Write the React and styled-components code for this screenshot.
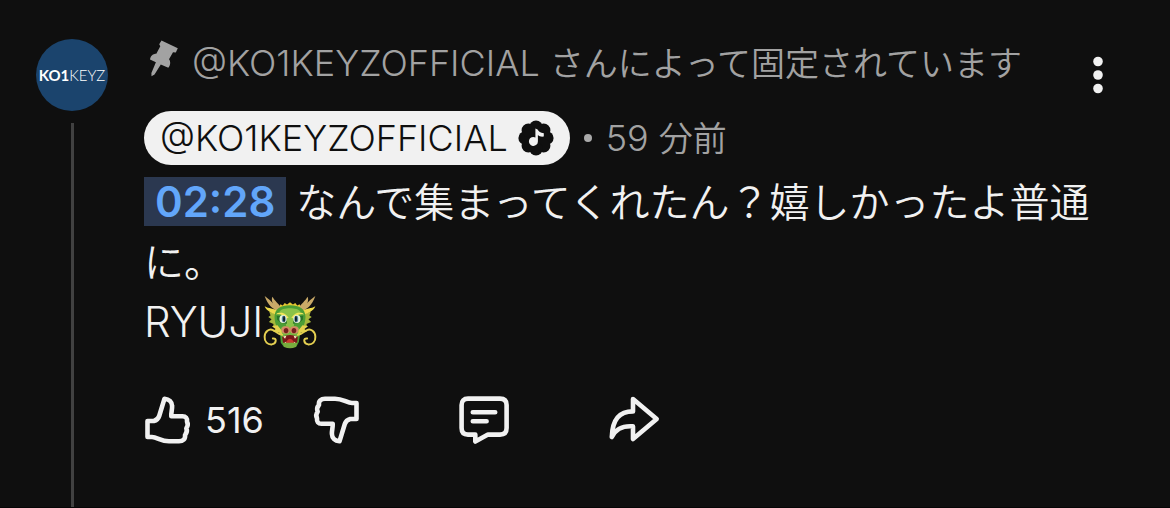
import React from "react";
import styled, { createGlobalStyle } from "styled-components";

const latin = `Inter, "Noto Sans CJK JP", sans-serif`;

const GlobalStyle = createGlobalStyle`
  *, *::before, *::after { box-sizing: border-box; }
  body {
    margin: 0;
    background: #0f0f0f;
    color: #f1f1f1;
    font-family: ${latin};
    font-weight: 350;
  }
`;

const Comment = styled.article`
  display: grid;
  grid-template-columns: 72px minmax(0, 1fr);
  column-gap: 36px;
  min-height: 100vh;
  padding: 39px 56px 0 36px;
  border-bottom: 1px solid #060606;
`;

const Rail = styled.div`
  display: flex;
  flex-direction: column;
  align-items: center;
  gap: 12px;
`;

const Avatar = styled.a`
  display: flex;
  flex: none;
  align-items: center;
  justify-content: center;
  width: 72px;
  height: 72px;
  border-radius: 50%;
  background: #1b446d;
  color: #fff;
  font: 300 15px/20px Lato, sans-serif;
  text-decoration: none;
`;

const AvatarStrong = styled.span`
  font-weight: 700;
`;

const ThreadLine = styled.div`
  flex: 1;
  width: 3px;
  background: #414141;
`;

const Content = styled.div`
  min-width: 0;
  padding-bottom: 60px;
`;

const Header = styled.header`
  display: flex;
  align-items: flex-start;
  justify-content: space-between;
  height: 72px;
`;

const Pinned = styled.div`
  display: flex;
  align-items: flex-start;
  gap: 13px;
  padding-left: 3px;
  color: #a2a2a2;
  font-size: 36px;
  line-height: 48px;
`;

const Japanese = styled.span`
  font-family: "Noto Sans CJK JP", sans-serif;
  font-weight: 350;
  font-size: ${(p) => p.$size}px;
  line-height: ${(p) => p.$size}px;
`;

const MenuButton = styled.button`
  display: flex;
  padding: 0;
  border: 0;
  background: none;
  color: inherit;
  cursor: pointer;
`;

const Byline = styled.div`
  display: flex;
  align-items: center;
  gap: 14px;
  color: #a2a2a2;
  font-size: 36px;
  line-height: 54px;
`;

const AuthorChip = styled.a`
  display: flex;
  align-items: center;
  gap: 10px;
  height: 54px;
  padding: 0 16px;
  border-radius: 27px;
  background: #f1f1f1;
  color: #0f0f0f;
  text-decoration: none;
`;

const Dot = styled.span`
  width: 8px;
  height: 8px;
  border-radius: 50%;
  background: #aaa;
`;

const Body = styled.p`
  margin: 7px 0 0;
  font-size: 42px;
  line-height: 60px;
`;

const Timestamp = styled.a`
  display: inline-block;
  margin-right: 10px;
  padding: 0 11px;
  background: #2b3850;
  color: #62a6fa;
  font-weight: 600;
  line-height: 49px;
  text-decoration: none;
`;

const Emoji = styled.svg`
  width: 54px;
  height: 54px;
  vertical-align: -12px;
`;

const Actions = styled.div`
  display: flex;
  align-items: center;
  gap: 98px;
  margin-top: 42px;
`;

const Votes = styled.div`
  display: flex;
  gap: 48px;
`;

const Action = styled.button`
  display: flex;
  align-items: center;
  gap: 13px;
  padding: 0;
  border: 0;
  background: none;
  color: inherit;
  font: 400 36px/52px ${latin};
  cursor: pointer;
`;

const LineIcon = styled.svg`
  width: ${(p) => p.$size || 52}px;
  height: ${(p) => p.$size || 52}px;
  fill: none;
  stroke: currentColor;
  stroke-width: 4.6;
  stroke-linecap: round;
  stroke-linejoin: round;
`;

const thumb =
  "M3.5 25V41H8C13 41 17 45.3 25 45.3H35C39 45.3 41.6 43 41 39.2C43.2 36.5 43.3 34.5 42.3 32.3C44.2 29.8 44.1 27.7 43 25.6C43.4 22.3 41.8 20.2 38.5 20.2H27.3C27 16.5 28.3 13.5 28.1 10C28 6 25 3.2 20.5 2.7L15.2 20C14.4 22.5 12.6 24.3 9.8 25Z";

function Thumb({ down }) {
  return (
    <LineIcon $size={48} viewBox="0 0 48 48" aria-hidden="true">
      <path d={thumb} transform={down ? "rotate(180 24 24)" : undefined} />
    </LineIcon>
  );
}

function PinIcon() {
  return (
    <svg width="32" height="40" viewBox="0 0 32 40" fill="currentColor" aria-hidden="true">
      <path d="M14.5 1.5L30.8 9.3L28.8 13.6L26 13.2L22 20.3C23.8 22.4 23.6 26.5 21.3 28.8L13.8 25.4L7.5 35.5L4.5 37.3L4.4 34L8.9 23.2L3 20.4C3.6 16.8 6 14.7 9.3 14.7L13.3 7.2L12.2 5.2Z" />
    </svg>
  );
}

function ArtistBadge() {
  return (
    <svg width="36" height="36" viewBox="0 0 36 36" role="img" aria-label="公式アーティスト">
      <g fill="#0f0f0f">
        <circle cx="18" cy="18" r="15" />
        {[0, 45, 90, 135, 180, 225, 270, 315].map((angle) => (
          <circle key={angle} cx="18" cy="7.2" r="6.8" transform={`rotate(${angle} 18 18)`} />
        ))}
      </g>
      <path
        fill="#f1f1f1"
        d="M17.4 8.6L19.6 9.6C20.4 11.6 22.6 12.8 25.8 13.2V16.6C23.4 17 21.2 16.4 19.9 15V21.4A4.5 4.5 0 1 1 17.4 17.4Z"
      />
    </svg>
  );
}

function DragonEmoji() {
  return (
    <Emoji viewBox="38 42 164 164" role="img" aria-label="ドラゴンの顔">
      <g fill="#a6b83c">
        <path d="M73 98L57 93L61 104L54 109L64 116L56 124L70 130L68 139L82 140V95Z" />
        <path d="M167 98L183 93L179 104L186 109L176 116L184 124L170 130L172 139L158 140V95Z" />
        <path d="M85 82L91 70L98 74L104 66L111 71L120 64L129 71L136 66L142 74L149 70L155 82Z" fill="#e5c832" />
      </g>
      <path fill="#c9a968" d="M83 91C67 84 53 73 43 45C57 56 66 63 68 68C64 58 64 52 67 47C73 61 87 67 93 82Z" />
      <path fill="#c9a968" d="M157 91C173 84 187 73 197 45C183 56 174 63 172 68C176 58 176 52 173 47C167 61 153 67 147 82Z" />
      <path fill="#ecd94a" d="M82 103C68 98 48 91 43 76C55 84 70 81 87 92ZM158 103C172 98 192 91 197 76C185 84 170 81 153 92Z" />
      <path fill="#4c9e35" d="M73 108C74 83 91 73 120 73S166 83 167 108C167 130 157 144 151 159L147 185L139 199H101L92 187L90 160C83 144 73 130 73 108Z" />
      <path fill="#8bc248" d="M88 93C95 79 144 79 152 93L135 105L130 153H110L105 105Z" />
      <path fill="#297429" d="M80 105L108 108L111 129L92 126L81 117ZM160 105L132 108L129 129L148 126L159 117Z" />
      <path fill="#f2e65a" d="M78 101C83 91 105 93 116 111L109 113C100 103 92 99 78 101ZM162 101C157 91 135 93 124 111L131 113C140 103 148 99 162 101Z" />
      <ellipse cx="99" cy="115" rx="11" ry="12" fill="#edf4dc" />
      <ellipse cx="141" cy="115" rx="11" ry="12" fill="#edf4dc" />
      <ellipse cx="101" cy="115" rx="6" ry="10" fill="#5186a0" />
      <ellipse cx="139" cy="115" rx="6" ry="10" fill="#5186a0" />
      <ellipse cx="102" cy="115" rx="3" ry="9" fill="#101b20" />
      <ellipse cx="138" cy="115" rx="3" ry="9" fill="#101b20" />
      <path fill="#76b842" d="M91 150C92 134 106 132 120 142C134 132 148 134 149 150L144 171H96Z" />
      <ellipse cx="107" cy="148" rx="13" ry="11" fill="#d58a65" />
      <ellipse cx="133" cy="148" rx="13" ry="11" fill="#d58a65" />
      <ellipse cx="108" cy="150" rx="7" ry="8" fill="#76201f" />
      <ellipse cx="132" cy="150" rx="7" ry="8" fill="#76201f" />
      <path fill="#791719" d="M96 169Q120 158 144 169L141 189H99Z" />
      <path fill="#c93a2e" d="M108 185Q120 165 132 185V190H108Z" />
      <path fill="#fff2c4" d="M99 168L105 175L109 166ZM141 168L135 175L131 166ZM102 190L106 184L110 190ZM138 190L134 184L130 190Z" />
      <path fill="#78ad3e" d="M98 187H142L138 200Q120 208 102 200Z" />
      <g fill="none" stroke="#e4cf51" strokeWidth="6" strokeLinecap="round">
        <path d="M96 163C80 160 77 152 69 149C57 142 43 154 43 169C42 184 52 193 65 192C79 190 81 172 68 174" />
        <path d="M144 163C160 160 163 152 171 149C183 142 197 154 197 169C198 184 188 193 175 192C161 190 159 172 172 174" />
      </g>
      <path fill="#e4d14c" d="M82 134L65 137L76 145L69 153L86 155L96 164L94 149ZM158 134L175 137L164 145L171 153L154 155L144 164L146 149Z" />
    </Emoji>
  );
}

export default function App() {
  return (
    <>
      <GlobalStyle />
      <Comment lang="ja">
        <Rail>
          <Avatar href="#channel">
            <AvatarStrong>KO1</AvatarStrong>KEYZ
          </Avatar>
          <ThreadLine />
        </Rail>
        <Content>
          <Header>
            <Pinned>
              <PinIcon />
              <span>
                @KO1KEYZOFFICIAL <Japanese $size={34}>さんによって固定されています</Japanese>
              </span>
            </Pinned>
            <MenuButton type="button" aria-label="その他の操作">
              <svg width="32" height="72" viewBox="0 0 32 72" fill="currentColor" aria-hidden="true">
                <circle cx="16" cy="22.5" r="4.8" />
                <circle cx="16" cy="36" r="4.8" />
                <circle cx="16" cy="49.5" r="4.8" />
              </svg>
            </MenuButton>
          </Header>
          <Byline>
            <AuthorChip href="#channel">
              @KO1KEYZOFFICIAL
              <ArtistBadge />
            </AuthorChip>
            <Dot />
            <span>
              59 <Japanese $size={34}>分前</Japanese>
            </span>
          </Byline>
          <Body>
            <Timestamp href="#t=148">02:28</Timestamp>
            <Japanese $size={40}>なんで集まってくれたん？嬉しかったよ普通に。</Japanese>
            <br />
            RYUJI
            <DragonEmoji />
          </Body>
          <Actions>
            <Votes>
              <Action type="button" aria-label="高く評価 516">
                <Thumb />
                516
              </Action>
              <Action type="button" aria-label="低く評価">
                <Thumb down />
              </Action>
            </Votes>
            <Action type="button" aria-label="返信">
              <LineIcon viewBox="0 0 52 52" aria-hidden="true">
                <path d="M10 4.6H42C46.5 4.6 48.6 7 48.6 11V34C48.6 38.3 46.5 40.6 42 40.6H30L17.3 47.5V40.6H10C5.7 40.6 3.6 38.3 3.6 34V11C3.6 7 5.7 4.6 10 4.6Z" />
                <path d="M14.8 18.3H37.2M14.8 27.3H28.6" />
              </LineIcon>
            </Action>
            <Action type="button" aria-label="共有">
              <LineIcon viewBox="0 0 52 52" aria-hidden="true">
                <path d="M25 5L48.7 25L25 45V32.4C15 31.6 8 34.5 3.8 43C4.4 25 11.5 17.4 25 17.4Z" />
              </LineIcon>
            </Action>
          </Actions>
        </Content>
      </Comment>
    </>
  );
}
